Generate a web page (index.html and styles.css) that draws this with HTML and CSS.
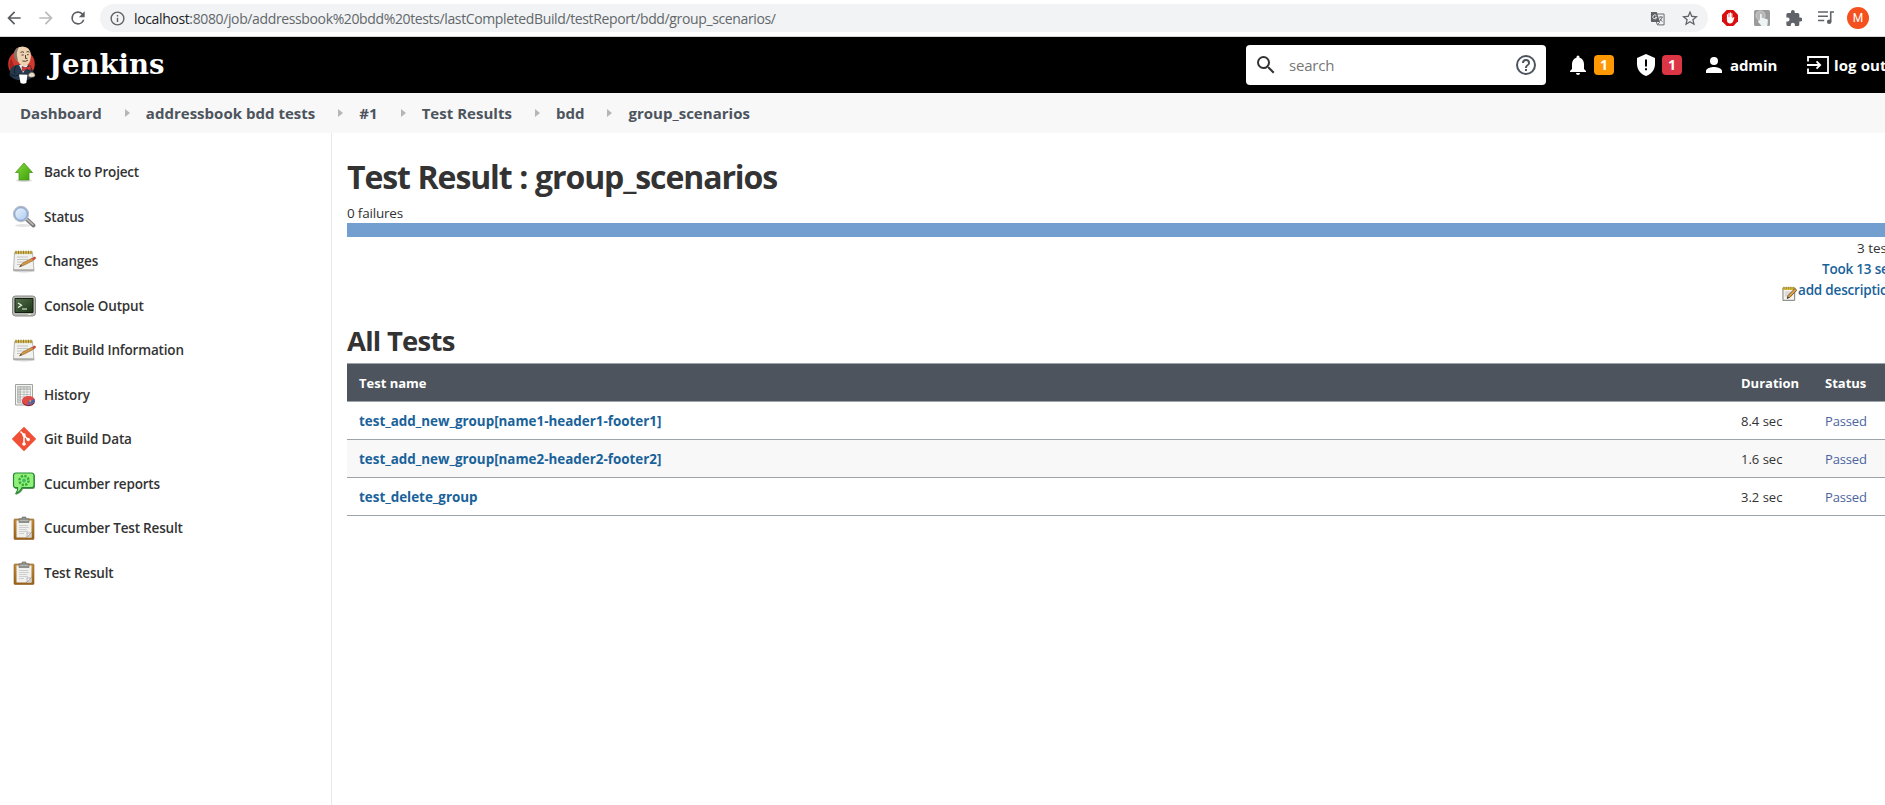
FILE: index.html
```html
<!DOCTYPE html>
<html lang="en">
<head>
<meta charset="utf-8">
<title>Test Result : group_scenarios [Jenkins]</title>
<link rel="stylesheet" href="styles.css">
</head>
<body>
<svg class="defs" width="0" height="0" aria-hidden="true">
  <defs>
    <linearGradient id="wood" x1="0" y1="0" x2="0" y2="1"><stop offset="0" stop-color="#c58c3c"/><stop offset="1" stop-color="#97611b"/></linearGradient>
    <linearGradient id="green" x1="0" y1="0" x2="1" y2="1"><stop offset="0" stop-color="#86da3a"/><stop offset="1" stop-color="#3c9c0a"/></linearGradient>
    <linearGradient id="lens" x1="0" y1="0" x2="1" y2="1"><stop offset="0" stop-color="#f0f6ff"/><stop offset="1" stop-color="#a9c8ef"/></linearGradient>
    <linearGradient id="screen" x1="0" y1="0" x2="1" y2="1"><stop offset="0" stop-color="#55704e"/><stop offset="1" stop-color="#1c3316"/></linearGradient>
    <symbol id="notepad" viewBox="0 0 24 24">
      <ellipse cx="12" cy="22" rx="11" ry="1.4" fill="#d4d4d4"/>
      <path d="M2.5 3.5h18L22 21.5H1.5z" fill="#f1f1ef" stroke="#a5a5a2" stroke-width=".8"/>
      <path d="M1.5 20.2h20.4v1.6H1.4z" fill="#a9a9a6"/>
      <path d="M3 2.2h17.5v2.6H3z" fill="#d0b34b"/>
      <path d="M4 1.6v3.6M6.5 1.6v3.6M9 1.6v3.6M11.5 1.6v3.6M14 1.6v3.6M16.5 1.6v3.6M19 1.6v3.6" stroke="#8c742a" stroke-width=".8"/>
      <path d="M5 8h11M5 10.5h11M5 13h8M5 15.5h5" stroke="#c4c4c4" stroke-width="1"/>
      <path d="M7.5 17.8l3-3.6L20 9.2l1.6 2-9.3 4.8z" fill="#d99a45" stroke="#7f5521" stroke-width=".6"/>
      <path d="M20 9.2l2.2-1.4c1.4-.2 2.1 1.1 1.3 2.1L21.6 11.2z" fill="#c9493c"/>
      <path d="M7.5 17.8l1.5-1.8.8 1.2z" fill="#333"/>
    </symbol>
    <symbol id="clipboard" viewBox="0 0 24 24">
      <rect x="2" y="3" width="20" height="20.5" rx="1" fill="url(#wood)" stroke="#8b5a1c" stroke-width=".6"/>
      <path d="M4.5 4.5h15v17h-15z" fill="#f0f0ef"/>
      <path d="M19.5 16.5v5h-5z" fill="#cfcfcd"/>
      <path d="M14.5 21.5c1-1.5.8-3 .4-4.7 1.6.5 3.2.4 4.6-.3z" fill="#fff" stroke="#777" stroke-width=".5"/>
      <path d="M7 9.5h9M7 11.5h10M7 13.5h8M7 15.5h9M7 17.5h5" stroke="#cbcbcb" stroke-width=".9"/>
      <path d="M7 2.7h3V1h4v1.7h3v3.8H7z" fill="#8f918d" stroke="#6b6d69" stroke-width=".6"/>
      <path d="M7.5 4.5h9" stroke="#b5b7b3"/>
    </symbol>
  </defs>
</svg>

<div class="browser">
  <svg class="nav-icon" viewBox="0 0 24 24"><path d="M20 11H7.83l5.59-5.59L12 4l-8 8 8 8 1.41-1.41L7.83 13H20z"/></svg>
  <svg class="nav-icon faded" viewBox="0 0 24 24"><path d="M4 11h12.17l-5.59-5.59L12 4l8 8-8 8-1.41-1.41L16.17 13H4z"/></svg>
  <svg class="nav-icon" viewBox="0 0 24 24"><path d="M17.65 6.35A7.96 7.96 0 0 0 12 4a8 8 0 1 0 7.73 10h-2.08A6 6 0 1 1 12 6c1.66 0 3.14.69 4.22 1.78L13 11h7V4z"/></svg>
  <div class="address">
    <svg class="info" viewBox="0 0 24 24"><path d="M11 7h2v2h-2zm0 4h2v6h-2zm1-9a10 10 0 1 0 0 20 10 10 0 0 0 0-20zm0 18a8 8 0 1 1 0-16 8 8 0 0 1 0 16z"/></svg>
    <span class="url"><b>localhost</b>:8080/job/addressbook%20bdd%20tests/lastCompletedBuild/testReport/bdd/group_scenarios/</span>
    <svg class="translate" viewBox="0 0 16 16">
      <path d="M6.5 3.2H15v11.6H8L6.5 11" fill="#f1f3f4" stroke="#5f6368" stroke-width="1"/>
      <path d="M1 1h6.2l3.4 10.8H2A1 1 0 0 1 1 10.8z" fill="#5f6368"/>
      <path d="M6.8 5A2.1 2.1 0 1 0 7.2 6.7H5.3" fill="none" stroke="#f1f3f4" stroke-width="1"/>
      <path d="M9.3 6.5h4.5M11.5 5.5v1M13 6.5c-.5 2-1.5 3.5-3 4.6M10.5 8c.8 1.6 1.7 2.6 3 3.5M8 14.5l2.5-2.7" fill="none" stroke="#5f6368" stroke-width=".9"/>
    </svg>
    <svg class="star" viewBox="2 1.500 20 20"><path d="M22 9.240l-7.190-.62L12 2 9.190 8.630 2 9.240l5.460 4.730L5.820 21 12 17.270 18.180 21l-1.630-7.030zM12 15.400l-3.760 2.270 1-4.280-3.320-2.880 4.380-.38L12 6.100l1.710 4.040 4.380.38-3.320 2.880 1 4.280z"/></svg>
  </div>
  <svg class="ext" viewBox="0 0 16 16">
    <path d="M4.700 0h6.600L16 4.700v6.600L11.300 16H4.700L0 11.300V4.700z" fill="#d90f0f"/>
    <path d="M4.900 8.300V4.600q.6-.8 1.100 0v2.600h.3V3.200q.6-.9 1.200 0v3.700h.3V2.700q.6-.9 1.200 0v4.200h.3V3.400q.6-.8 1.100 0v5.200l1-1.300q.8-.4 1.100.3L11 11.700Q10.200 13.400 8.300 13.400 4.900 13.400 4.900 10z" fill="#fff"/>
  </svg>
  <svg class="ext" viewBox="0 0 16 16">
    <rect width="16" height="16" rx="1.500" fill="#9b9b9b"/>
    <circle cx="6.500" cy="5.500" r="4.600" fill="#b7b7b7" stroke="#cbcbcb"/>
    <path d="M6 10.500V4.300q.8-1.200 1.700 0v3.500l5.100 1.300q1.200.5 1.100 1.700L13.300 16H7.500l-3.600-4.600q.6-1.500 2.100-.9z" fill="#eef3f6"/>
  </svg>
  <svg class="ext" viewBox="1.500 1 21 21" fill="#5f6368"><path d="M20.500 11H19V7a2 2 0 0 0-2-2h-4V3.500a2.500 2.500 0 0 0-5 0V5H4a2 2 0 0 0-2 2v3.800h1.500a2.700 2.700 0 0 1 0 5.400H2V20a2 2 0 0 0 2 2h3.800v-1.500a2.700 2.700 0 0 1 5.400 0V22H17a2 2 0 0 0 2-2v-4h1.500a2.500 2.500 0 0 0 0-5z"/></svg>
  <svg class="ext" viewBox="0 0 16 16"><path d="M0 2h10M0 6.300h10M0 10.500h6.200M12.700 11.800V2H16" fill="none" stroke="#5f6368" stroke-width="1.600"/><circle cx="11.200" cy="11.800" r="2.300" fill="#5f6368"/></svg>
  <span class="avatar">M</span>
</div>

<header class="header">
  <svg class="butler" viewBox="0 0 28 38">
    <ellipse cx="13.500" cy="18" rx="13.300" ry="13.800" fill="#cf3a30"/>
    <path d="M3 12q-3 7 0 13l4-3z" fill="#a9231c"/>
    <path d="M1.500 29q0-8 6.500-10l10-1q7 2 8 11-4 6-12 5.500Q5 34 1.500 29z" fill="#26394c"/>
    <path d="M11 19l4 8 5-8z" fill="#edf0f1"/>
    <path d="M6.500 9Q6 1 14.500.6q8 .2 8.400 9-.2 7.600-4.600 10.200-5 1.200-8.300-4.300Q7 13.500 6.500 9z" fill="#efd2b0"/>
    <path d="M6.300 11Q5 3 11 1.300 8.300 5 9 10l1 5q-3-.5-3.700-4z" fill="#83766a"/>
    <path d="M12.500 6.400q2-1.300 3.500 0M18.500 6q1.500-1 3 .2M13.500 9h2.200M19 8.700h1.700M17.500 9v3.400h1.800M14.500 15q3 .9 5.400-.7" fill="none" stroke="#3a2e28" stroke-width=".9"/>
    <path d="M14 20.500l4 1.200 4.500-2.200.8 5-4.300-1.500-4.600 2.300z" fill="#dc3a36" stroke="#571512" stroke-width=".5"/>
    <path d="M2 28q6 4 10-.5M8 20q-3 4-1 8" fill="none" stroke="#11202d" stroke-width="1"/>
    <path d="M11 28.500l8.500.3-1.200 8.200q-3 1.300-5.800 0z" fill="#fff"/>
    <path d="M21 27.500q3-2.500 5.500 0 1.500 2-.5 3.600-4 .9-6-1z" fill="#e9dccd" stroke="#403833" stroke-width=".5"/>
  </svg>
  <span class="brand">Jenkins</span>
  <div class="search">
    <svg class="glass" viewBox="0 0 24 24"><path d="M15.500 14h-.79l-.28-.27A6.470 6.470 0 0 0 16 9.500 6.500 6.500 0 1 0 9.500 16c1.610 0 3.090-.59 4.230-1.570l.27.28v.79l5 4.990L20.490 19zm-6 0a4.500 4.500 0 1 1 0-9 4.500 4.500 0 0 1 0 9z"/></svg>
    <span class="placeholder">search</span>
    <svg class="help" viewBox="0 0 24 24"><path d="M11 16h2v2h-2zm1-14a10 10 0 1 0 0 20 10 10 0 0 0 0-20zm0 18a8 8 0 1 1 0-16 8 8 0 0 1 0 16zm0-14a4 4 0 0 0-4 4h2a2 2 0 1 1 4 0c0 2-3 1.750-3 5h2c0-2.250 3-2.500 3-5a4 4 0 0 0-4-4z"/></svg>
  </div>
  <svg class="bell" viewBox="4 2 16 20"><path d="M12 22a2 2 0 0 0 2-2h-4a2 2 0 0 0 2 2zm6-6v-5c0-3.070-1.640-5.640-4.500-6.320V4a1.500 1.500 0 0 0-3 0v.68C7.630 5.360 6 7.920 6 11v5l-2 2v1h16v-1z"/></svg>
  <span class="badge warn">1</span>
  <svg class="shield" viewBox="3 1 18 22"><path d="M12 1L3 5v6c0 5.550 3.840 10.740 9 12 5.160-1.260 9-6.450 9-12V5z" fill="#fff"/><path d="M11 6.500h2v7h-2zm0 8.700h2v2h-2z" fill="#000"/></svg>
  <span class="badge danger">1</span>
  <svg class="person" viewBox="4 4 16 16"><path d="M12 12a4 4 0 1 0 0-8 4 4 0 0 0 0 8zm0 2c-2.670 0-8 1.340-8 4v2h16v-2c0-2.660-5.330-4-8-4z"/></svg>
  <span class="user">admin</span>
  <svg class="exit" viewBox="0 0 22 18"><path d="M1 5.500V1h20v16H1v-4.500M0 9h13M9.500 5.300L13.200 9l-3.700 3.700" fill="none" stroke="#fff" stroke-width="1.800"/></svg>
  <span class="logout">log out</span>
</header>

<nav class="crumbs">
  <span>Dashboard</span><i></i><span>addressbook bdd tests</span><i></i><span>#1</span><i></i><span>Test Results</span><i></i><span>bdd</span><i></i><span>group_scenarios</span>
</nav>

<div class="page">
  <aside class="side">
    <a class="task"><svg viewBox="0 0 24 24"><ellipse cx="12" cy="20.500" rx="8" ry="1.500" fill="#d9d9d9"/><path d="M12 3l8.500 9.500H17V20H7v-7.500H3.500z" fill="url(#green)" stroke="#4a9a1c" stroke-width=".8"/></svg>Back to Project</a>
    <a class="task"><svg viewBox="0 0 24 24"><ellipse cx="11" cy="20.500" rx="8" ry="1.500" fill="#e4e4e4"/><path d="M14.500 14l7 6.500" stroke="#777" stroke-width="3.800" stroke-linecap="round"/><path d="M15.500 14.700l5.500 5" stroke="#c0c0c0" stroke-width="1.500" stroke-linecap="round"/><circle cx="9" cy="9" r="7.300" fill="url(#lens)" stroke="#b9bdc4" stroke-width="1.700"/><circle cx="9" cy="9" r="6.300" fill="none" stroke="#6c98d1" stroke-width=".9"/></svg>Status</a>
    <a class="task"><svg><use href="#notepad"/></svg>Changes</a>
    <a class="task"><svg viewBox="0 0 24 24"><rect x=".5" y="2" width="23" height="20" rx="3" fill="#b9bab5" stroke="#8b8c87"/><path d="M3 4.500h18v14H3z" fill="url(#screen)" stroke="#13200f"/><path d="M6 9l3.500 2.200L6 13.400M10 15h5" fill="none" stroke="#eef5e8" stroke-width="1.200"/><path d="M16 20.500h3" stroke="#e4f3c9"/></svg>Console Output</a>
    <a class="task"><svg><use href="#notepad"/></svg>Edit Build Information</a>
    <a class="task"><svg viewBox="0 0 24 24"><path d="M3.500 1.500h17v20.500h-17z" fill="#f4f4f3" stroke="#a2a29f"/><path d="M5.500 3.500h13v3h-13zM5.500 6.500h3V20h-3z" fill="#cdd0cc"/><path d="M5.500 3.500h13V20h-13zM8.500 3.500V20M12 3.500V20M15 3.500V20M5.500 6.500h13M5.500 9h13M5.500 11.500h13M5.500 14h13M5.500 17h13" fill="none" stroke="#adb0ac" stroke-width=".7"/><ellipse cx="16.500" cy="18.500" rx="6.400" ry="4.700" fill="#8d1d1d"/><ellipse cx="16.500" cy="17.500" rx="6.400" ry="4.500" fill="#e14a46"/><path d="M16.500 17.500l6.200-1.200q.6 4.600-4.700 5.500z" fill="#4265a8"/><path d="M16.500 17.500l4 3.600q-3 1.800-5.500.8z" fill="#7c5c9c"/><path d="M16.500 17.500l3-.5-.8 2.500z" fill="#e7a23a"/></svg>History</a>
    <a class="task"><svg viewBox="0 0 24 24"><path d="M12 .8L23.200 12 12 23.200.8 12z" fill="#ef5036" stroke="#ef5036" stroke-width="1.500" stroke-linejoin="round"/><path d="M8.500 4.500L12 8v9M12 8.500l4 4" fill="none" stroke="#fff" stroke-width="1.500"/><circle cx="12" cy="8" r="1.700" fill="#fff"/><circle cx="12" cy="17" r="1.800" fill="#fff"/><circle cx="16.200" cy="12.500" r="1.700" fill="#fff"/></svg>Git Build Data</a>
    <a class="task"><svg viewBox="0 0 24 24"><path d="M4.500 2h16q2.500 0 2.500 2.500v10q0 2.500-2.500 2.500H11q-2 4.500-7.500 6 2.500-3 2-6h-1Q2 17 2 14.500v-10Q2 2 4.500 2z" fill="#679765"/><path d="M4 1h15.500Q22 1 22 3.500v9.700q0 2.500-2.500 2.500H10q-2 4.300-5.800 5.500 2-2.800 1.300-5.500H4q-2.500 0-2.500-2.500V3.500Q1.500 1 4 1z" fill="#93ef7c" stroke="#238a32" stroke-width="1.200"/><circle cx="12" cy="8.500" r="4.500" fill="none" stroke="#35ad35" stroke-width="2.500" stroke-dasharray="2.200 1.300"/><circle cx="12" cy="8.500" r="1.900" fill="#43b968"/></svg>Cucumber reports</a>
    <a class="task"><svg><use href="#clipboard"/></svg>Cucumber Test Result</a>
    <a class="task"><svg><use href="#clipboard"/></svg>Test Result</a>
  </aside>
  <main class="main">
    <h1>Test Result : group_scenarios</h1>
    <div class="failures">0 failures</div>
    <div class="bar"></div>
    <div class="summary">
      <div class="count">3 tests</div>
      <a class="took">Took 13 sec.</a>
      <a class="describe"><svg viewBox="0 0 16 16"><path d="M1 2h12.500v13.300H1z" fill="#f3f3ef" stroke="#77766f"/><path d="M1 1.500h12.500v2.700H1z" fill="#d9bd3e"/><path d="M2 .7v3M4.500.7v3M7 .7v3M9.500.7v3M12 .7v3" stroke="#8e7720" stroke-width=".8"/><path d="M3 6.500h7M3 8.500h6M3 10.500h4" stroke="#b7b7b5" stroke-width=".8"/><path d="M5.500 13.300l1-3.200L13.800 2.600 15.800 4.500 8.500 12z" fill="#dda348" stroke="#593b16" stroke-width=".8"/><path d="M5.500 13.300l.6-1.900 1.200 1.100z" fill="#222"/></svg>add description</a>
    </div>
    <h2>All Tests</h2>
    <table class="tests">
      <thead><tr><th>Test name</th><th class="dur">Duration</th><th class="st">Status</th></tr></thead>
      <tbody>
        <tr><td><a>test_add_new_group[name1-header1-footer1]</a></td><td>8.4 sec</td><td class="pass">Passed</td></tr>
        <tr><td><a>test_add_new_group[name2-header2-footer2]</a></td><td>1.6 sec</td><td class="pass">Passed</td></tr>
        <tr><td><a>test_delete_group</a></td><td>3.2 sec</td><td class="pass">Passed</td></tr>
      </tbody>
    </table>
  </main>
</div>
</body>
</html>
```

FILE: styles.css
```css
* { box-sizing: border-box; }
html { overflow: hidden; }
body {
  margin: 0;
  width: 1885px;
  height: 805px;
  overflow: hidden;
  background: #fff;
  color: #333;
  font: 13.5px "Open Sans", "Noto Sans", sans-serif;
}
svg { display: block; flex: none; }
.defs { position: absolute; }

/* Browser toolbar */
.browser {
  display: flex;
  align-items: center;
  height: 37px;
  border-bottom: 1px solid #d5d6d8;
  padding-left: 4px;
}
.nav-icon { width: 20px; height: 20px; fill: #5a5d61; margin-right: 12px; }
.nav-icon.faded { fill: #b9bbbd; }
.address {
  display: flex;
  align-items: center;
  width: 1608px;
  height: 28px;
  padding-left: 9px;
  border-radius: 14px;
  background: #f1f3f4;
  color: #63676b;
}
.info { width: 17px; height: 17px; fill: #5f6368; }
.url { flex: 1; margin-left: 8px; font-size: 14px; letter-spacing: -.37px; white-space: nowrap; }
.url b { font-weight: 400; color: #202124; }
.translate { width: 15px; height: 15px; margin-right: 17px; }
.star { width: 16px; height: 16px; margin-right: 10px; fill: #5f6368; }
.ext { width: 16px; height: 16px; margin-right: 16px; }
.address + .ext { margin-left: 14px; }
.avatar {
  width: 22px;
  height: 22px;
  margin-left: -3px;
  border-radius: 50%;
  background: #f4511e;
  color: #fff;
  font: 12px/22px Roboto, sans-serif;
  text-align: center;
}

/* Jenkins header */
.header {
  display: flex;
  align-items: center;
  height: 56px;
  padding-left: 8px;
  background: #000;
  color: #fff;
  font-size: 15px;
  font-weight: 700;
  white-space: nowrap;
}
.butler { width: 28px; height: 38px; }
.brand { flex: 1; padding: 0 0 2px 13px; font: bold 27.5px "DejaVu Serif", serif; }
.search {
  display: flex;
  align-items: center;
  flex: none;
  width: 300px;
  height: 40px;
  padding: 0 8px;
  border-radius: 4px;
  background: #fff;
}
.glass { width: 24px; height: 24px; fill: #333; }
.placeholder { flex: 1; padding-left: 11px; color: #777; font-weight: 400; letter-spacing: -.2px; }
.help { width: 24px; height: 24px; fill: #4d545d; }
.bell { width: 16px; height: 20px; margin-left: 24px; fill: #fff; }
.badge {
  flex: none;
  width: 20px;
  height: 20px;
  border-radius: 4px;
  font-size: 14px;
  line-height: 20px;
  text-align: center;
}
.warn { margin-left: 8px; background: #fe9903; }
.danger { margin-left: 7px; background: #dc3545; }
.shield { width: 18px; height: 22px; margin-left: 23px; }
.person { width: 16px; height: 16px; margin-left: 24px; fill: #fff; }
.user { width: 85px; padding-left: 8px; letter-spacing: -.12px; }
.exit { width: 22px; height: 18px; }
.logout { width: 56px; padding-left: 5px; letter-spacing: .1px; }

/* Breadcrumbs */
.crumbs {
  display: flex;
  align-items: center;
  height: 40px;
  padding-left: 20px;
  background: #f8f8f8;
  color: #4d545d;
  font-size: 15px;
  font-weight: 700;
  letter-spacing: .02px;
  white-space: nowrap;
}
.crumbs i {
  margin: 0 16px 0 23px;
  border: 4px solid transparent;
  border-left: 5px solid #b4b7ba;
  border-right: 0;
}

.page { display: flex; height: 672px; }
.side { flex: none; width: 332px; padding-top: 17px; border-right: 1px solid #e8e8e8; }
.task {
  display: flex;
  align-items: center;
  height: 44.5px;
  padding-left: 12px;
  gap: 8px;
  font-size: 13.5px;
  font-weight: 560;
  letter-spacing: -.18px;
}
.task svg { width: 24px; height: 24px; }

/* The content column runs past the right edge of the window */
.main { flex: none; width: 1558px; padding-left: 15px; }
h1 { margin: 23px 0 0; font-size: 32px; line-height: 42px; letter-spacing: -1.1px; word-spacing: .5px; }
.failures { margin-top: 6px; line-height: 18px; letter-spacing: -.2px; }
.bar { height: 14px; margin-top: 1px; background: #729fcf; }
.summary { width: 106px; margin-left: 1435px; padding-top: 1px; line-height: 21px; white-space: nowrap; }
.summary > * { display: flex; }
.summary a { color: #19629a; font-weight: 560; letter-spacing: -.2px; }
.count { padding-left: 75px; }
.took { padding-left: 40px; }
.describe svg { width: 15px; height: 15px; margin-top: 6px; }
.describe { gap: 1px; }
h2 { margin: 21px 0 0; font-size: 27.5px; line-height: 37px; letter-spacing: -.75px; }
.tests { width: 100%; margin-top: 4px; border-collapse: collapse; table-layout: fixed; font-size: 13px; }
.tests th, .tests td { height: 38px; padding: 1px 0 0 12px; text-align: left; border: solid #9da3aa; border-width: 1px 0; }
.tests th { background: #4d545d; color: #fff; font-weight: 700; }
.tests .dur { width: 84px; }
.tests .st { width: 77px; }
.tests a { color: #19629a; font-size: 13.4px; font-weight: 700; }
.tests tbody tr:nth-child(even) { background: #f8f8f8; }
.tests .pass { color: #4b64a0; letter-spacing: -.15px; }
```
